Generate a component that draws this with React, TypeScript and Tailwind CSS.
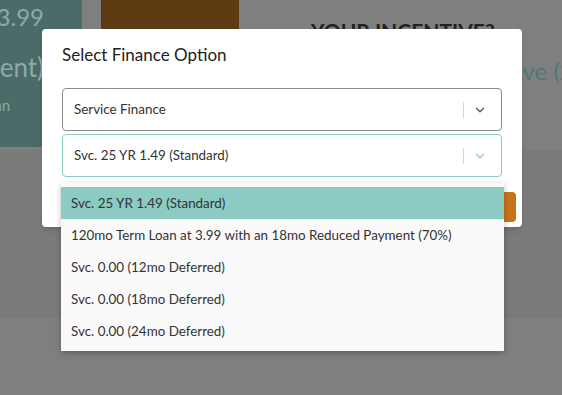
import { ChevronDown } from "lucide-react";

const OPTIONS = [
  "Svc. 25 YR 1.49 (Standard)",
  "120mo Term Loan at 3.99 with an 18mo Reduced Payment (70%)",
  "Svc. 0.00 (12mo Deferred)",
  "Svc. 0.00 (18mo Deferred)",
  "Svc. 0.00 (24mo Deferred)",
];

const font = { fontFamily: "Lato, 'Open Sans', sans-serif" };

function Select({ value, active }: { value: string; active?: boolean }) {
  return (
    <div
      className={
        "flex h-[43px] items-center rounded-[4px] border bg-white pl-[11px] pr-[14px] " +
        (active ? "border-[#8fcbc5]" : "border-[#8a8a8a]")
      }
    >
      <span className="flex-1 text-[13.4px] text-[#333]">{value}</span>
      <span className="h-[16px] w-px bg-[#d4d4d4]" />
      <ChevronDown
        className={"ml-[9px] h-[14px] w-[14px] " + (active ? "text-[#8fcbc5]" : "text-[#555]")}
        strokeWidth={2.2}
      />
    </div>
  );
}

function Backdrop() {
  return (
    <div className="h-[395px] w-[562px] bg-[#7f7f7f]">
      <div className="flex h-[150px]">
        <div className="flex h-[147px] w-[82px] shrink-0 flex-col overflow-hidden bg-[#4b6b68] text-[#8fa9a6]">
          <div className="flex w-[44px] justify-end whitespace-nowrap pt-[2px] text-[24px] leading-[30px]">
            Loan at 3.99
          </div>
          <div className="mt-[20px] flex w-[44px] justify-end whitespace-nowrap text-[26px] leading-[30px]">
            (70% Payment)
          </div>
          <div className="mt-[14px] flex w-[10px] justify-end whitespace-nowrap text-[15px] leading-[18px]">
            Plan
          </div>
        </div>
        <div className="ml-[19px] h-[120px] w-[138px] shrink-0 bg-[#5e3a12]" />
        <div className="flex min-w-0 flex-1 flex-col overflow-hidden">
          <div className="ml-[72px] mt-[18px] whitespace-nowrap text-[21px] font-bold leading-[26px] text-[#222]">
            YOUR INCENTIVE?
          </div>
          <div className="ml-[259px] mt-[12px] whitespace-nowrap text-[24px] leading-[30px] text-[#4b7a77]">
            Save (2%)
          </div>
        </div>
      </div>
      <div className="h-[168px] bg-[#7a7a7a]" />
    </div>
  );
}

export default function App() {
  return (
    <div className="relative h-[395px] w-[562px] overflow-hidden" style={font}>
      <Backdrop />
      <div className="absolute left-[42px] top-[29px] w-[480px] rounded-[4px] bg-white px-[20px] pb-[5px] pt-[14px] shadow-md">
        <h1 className="text-[17px] leading-[24px] text-[#222]">Select Finance Option</h1>
        <div className="mt-[21px]">
          <Select value="Service Finance" />
        </div>
        <div className="mt-[3px]">
          <Select value="Svc. 25 YR 1.49 (Standard)" active />
        </div>
        <div className="-mr-[14px] mt-[15px] flex justify-end">
          <button className="h-[30px] w-[110px] rounded-[4px] bg-[#c8731a] text-[14px] text-white">Next</button>
        </div>
        <ul className="absolute left-[19px] top-[154px] w-[443px] bg-[#fafafa] py-[4px] shadow-[0_2px_6px_rgba(0,0,0,0.25)]">
          {OPTIONS.map((o, i) => (
            <li
              key={o}
              className={
                "flex h-[32px] items-center px-[10px] text-[13.4px] text-[#333] " + (i === 0 ? "bg-[#8ccac4]" : "")
              }
            >
              {o}
            </li>
          ))}
        </ul>
      </div>
    </div>
  );
}
